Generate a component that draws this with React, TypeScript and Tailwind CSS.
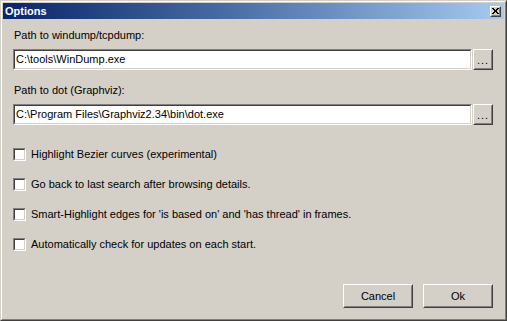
const FONT = "font-['Liberation_Sans',Arial,sans-serif]";

function Sunken({ children, className = "" }: { children?: React.ReactNode; className?: string }) {
  return (
    <div className={`border border-t-[#808080] border-l-[#808080] border-r-white border-b-white ${className}`}>
      <div className="h-full border border-t-[#404040] border-l-[#404040] border-r-[#d4d0c8] border-b-[#d4d0c8] bg-white">
        {children}
      </div>
    </div>
  );
}

function Raised({ children, className = "" }: { children?: React.ReactNode; className?: string }) {
  return (
    <div className={`border border-t-white border-l-white border-r-[#404040] border-b-[#404040] ${className}`}>
      <div className="h-full border border-t-[#d4d0c8] border-l-[#d4d0c8] border-r-[#808080] border-b-[#808080] bg-[#d4d0c8] flex items-center justify-center">
        {children}
      </div>
    </div>
  );
}

function PathField({ label, value }: { label: string; value: string }) {
  return (
    <div className="flex flex-col">
      <div className="h-[13px] leading-[13px] pl-px">{label}</div>
      <div className="flex mt-[7px] h-[21px]">
        <Sunken className="flex-1 h-[21px]">
          <div className="pl-px leading-[17px] whitespace-nowrap overflow-hidden">{value}</div>
        </Sunken>
        <Raised className="w-[20px] h-[21px] ml-px">
          <span className="leading-none tracking-[1px] mt-[2px]">...</span>
        </Raised>
      </div>
    </div>
  );
}

function Check({ label }: { label: string }) {
  return (
    <div className="flex items-center h-[13px]">
      <Sunken className="w-[13px] h-[13px]" />
      <span className="ml-[5px] leading-[13px] whitespace-nowrap">{label}</span>
    </div>
  );
}

export default function App() {
  const checks = [
    "Highlight Bezier curves (experimental)",
    "Go back to last search after browsing details.",
    "Smart-Highlight edges for 'is based on' and 'has thread' in frames.",
    "Automatically check for updates on each start.",
  ];

  return (
    <div className={`w-[507px] h-[321px] ${FONT} text-[11px] text-black`}>
      <div className="w-full h-full border border-t-[#d4d0c8] border-l-[#d4d0c8] border-r-[#404040] border-b-[#404040]">
        <div className="w-full h-full border border-t-white border-l-white border-r-[#808080] border-b-[#808080] bg-[#d4d0c8] p-px flex flex-col">
          <div className="h-[16px] flex items-center justify-between bg-gradient-to-r from-[#0a246a] to-[#a6caf0] pl-[2px] pr-[3px]">
            <span className="text-white font-bold text-[11px] leading-none">Options</span>
            <Raised className="w-[11px] h-[11px]">
              <svg width="7" height="6" viewBox="0 0 7 6" className="block">
                <path d="M0 0h2v1h1v1h1V1h1V0h2v1H6v1H5v2h1v1h1v1H5V5H4V4H3v1H2v1H0V5h1V4h1V2H1V1H0z" fill="#000" />
              </svg>
            </Raised>
          </div>

          <div className="flex flex-col pl-[10px] pr-[11px] pt-[10px]">
            <PathField label="Path to windump/tcpdump:" value="C:\tools\WinDump.exe" />
            <div className="mt-[14px]">
              <PathField label="Path to dot (Graphviz):" value="C:\Program Files\Graphviz2.34\bin\dot.exe" />
            </div>
            <div className="flex flex-col gap-[17px] mt-[23px]">
              {checks.map((c) => (
                <Check key={c} label={c} />
              ))}
            </div>
          </div>

          <div className="flex-1" />
          <div className="flex justify-end gap-[10px] pr-[11px] pb-[10px]">
            <Raised className="w-[70px] h-[24px]">Cancel</Raised>
            <Raised className="w-[70px] h-[24px]">Ok</Raised>
          </div>
        </div>
      </div>
    </div>
  );
}
